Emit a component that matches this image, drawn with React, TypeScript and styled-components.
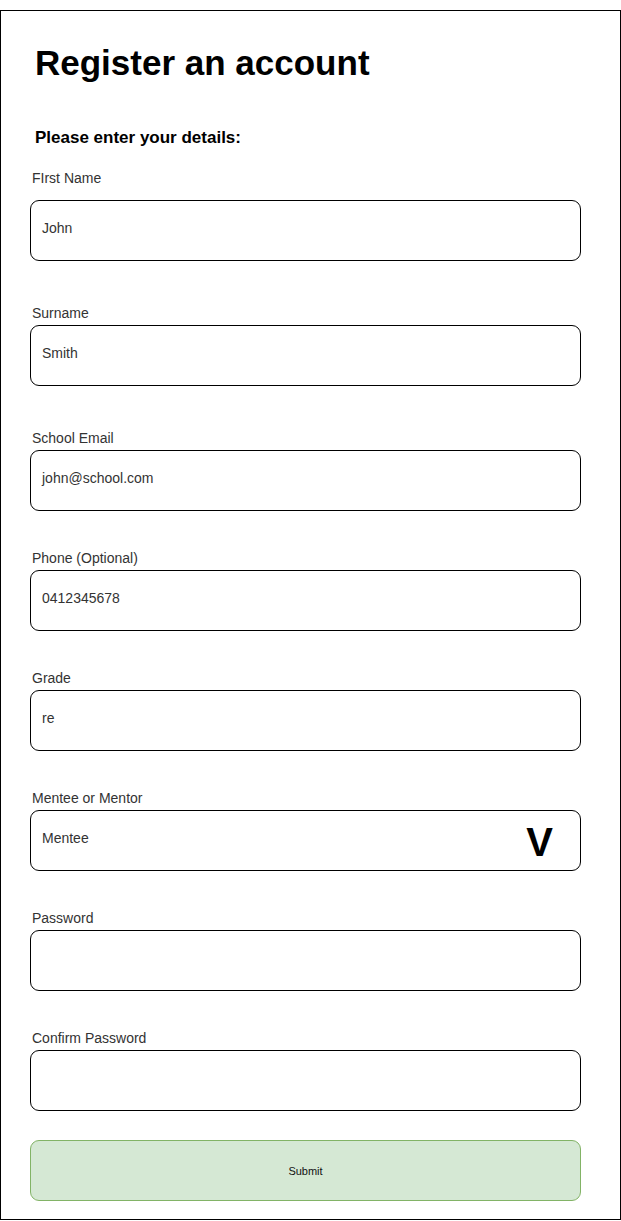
import React from "react";
import styled, { createGlobalStyle } from "styled-components";

const Global = createGlobalStyle`
  html, body { margin: 0; padding: 0; background: #fff; }
  body { font-family: "Liberation Sans", Arial, sans-serif; }
  * { box-sizing: border-box; }
`;

const Page = styled.div`
  padding-top: 10px;
`;

const Frame = styled.div`
  width: 621px;
  height: 1210px;
  border: 1px solid #000;
  padding: 32px 39px 0 29px;
  display: flex;
  flex-direction: column;
`;

const Title = styled.h1`
  margin: 0 0 45px 5px;
  font-size: 35px;
  line-height: 40px;
  font-weight: bold;
  color: #000;
`;

const Subtitle = styled.h2`
  margin: 0 0 22px 5px;
  font-size: 17px;
  line-height: 20px;
  font-weight: bold;
  color: #000;
`;

const Field = styled.div<{ $after: number }>`
  display: flex;
  flex-direction: column;
  margin-bottom: ${(p) => p.$after}px;
`;

const Label = styled.label<{ $gap: number }>`
  margin: 0 0 ${(p) => p.$gap}px 2px;
  font-size: 14px;
  line-height: 16px;
  color: #333;
`;

const Box = styled.div`
  width: 551px;
  height: 61px;
  border: 1px solid #000;
  border-radius: 9px;
  padding: 19px 27px 0 11px;
  display: flex;
  justify-content: space-between;
  align-items: flex-start;
`;

const Value = styled.span`
  font-size: 14px;
  line-height: 16px;
  color: #333;
`;

const Chevron = styled.span`
  font-size: 40px;
  line-height: 40px;
  font-weight: bold;
  color: #000;
  margin-top: -8px;
`;

const Submit = styled.button`
  width: 551px;
  height: 61px;
  border: 1px solid #82b366;
  border-radius: 9px;
  background: #d5e8d4;
  font-family: "Liberation Sans", Arial, sans-serif;
  font-size: 11px;
  color: #111;
  padding: 0;
`;

type F = { label: string; value?: string; gap: number; after: number; select?: boolean };

const fields: F[] = [
  { label: "FIrst Name", value: "John", gap: 14, after: 44 },
  { label: "Surname", value: "Smith", gap: 4, after: 44 },
  { label: "School Email", value: "john@school.com", gap: 4, after: 39 },
  { label: "Phone (Optional)", value: "0412345678", gap: 4, after: 39 },
  { label: "Grade", value: "re", gap: 4, after: 39 },
  { label: "Mentee or Mentor", value: "Mentee", gap: 4, after: 39, select: true },
  { label: "Password", gap: 4, after: 39 },
  { label: "Confirm Password", gap: 4, after: 29 },
];

export default function App() {
  return (
    <Page>
      <Global />
      <Frame>
        <Title>Register an account</Title>
        <Subtitle>Please enter your details:</Subtitle>
        {fields.map((f) => (
          <Field key={f.label} $after={f.after}>
            <Label $gap={f.gap}>{f.label}</Label>
            <Box>
              <Value>{f.value ?? ""}</Value>
              {f.select && <Chevron>V</Chevron>}
            </Box>
          </Field>
        ))}
        <Submit>Submit</Submit>
      </Frame>
    </Page>
  );
}
